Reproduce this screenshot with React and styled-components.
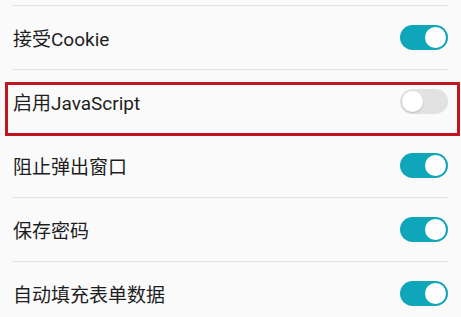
import React, { useState } from "react";
import styled, { createGlobalStyle } from "styled-components";

const GlobalStyle = createGlobalStyle`
  html, body {
    margin: 0;
    padding: 0;
    background: #fafafa;
  }
  body {
    font-family: Roboto, "Noto Sans CJK SC", sans-serif;
  }
`;

const Page = styled.div`
  position: relative;
  width: 461px;
  height: 317px;
  overflow: hidden;
  background: #fafafa;
`;

const TopEdge = styled.div`
  height: 5px;
  margin: 0 13px 0 12px;
  border-bottom: 1px solid #e3e3e3;
`;

const Row = styled.div`
  height: 63px;
  margin: 0 13px 0 12px;
  padding-left: 1px;
  display: flex;
  align-items: center;
  justify-content: space-between;
  border-bottom: 1px solid #e3e3e3;
`;

const Label = styled.span`
  font-size: 19px;
  color: #1e1e1e;
`;

const Track = styled.button`
  position: relative;
  width: 48px;
  height: 25px;
  padding: 0;
  border: none;
  border-radius: 13px;
  background: ${(p) => (p.$on ? "#0fa6b9" : "#e2e2e2")};
  cursor: pointer;
  flex-shrink: 0;
`;

const Knob = styled.span`
  position: absolute;
  top: 2px;
  left: ${(p) => (p.$on ? "25px" : "2px")};
  width: 21px;
  height: 21px;
  border-radius: 50%;
  background: #ffffff;
  box-shadow: ${(p) => (p.$on ? "none" : "0 1px 2px rgba(0,0,0,0.18)")};
`;

/* red annotation frame drawn over the JavaScript row */
const Highlight = styled.div`
  position: absolute;
  left: 5px;
  top: 82px;
  width: 455px;
  height: 54px;
  box-sizing: border-box;
  border: 3px solid #c3151f;
  pointer-events: none;
`;

function Toggle({ on, onClick }) {
  return (
    <Track $on={on} onClick={onClick}>
      <Knob $on={on} />
    </Track>
  );
}

const initial = [
  { label: "接受Cookie", on: true },
  { label: "启用JavaScript", on: false },
  { label: "阻止弹出窗口", on: true },
  { label: "保存密码", on: true },
  { label: "自动填充表单数据", on: true },
];

export default function App() {
  const [items, setItems] = useState(initial);

  const flip = (i) => {
    setItems(items.map((it, j) => (j === i ? { ...it, on: !it.on } : it)));
  };

  return (
    <Page>
      <GlobalStyle />
      <TopEdge />
      {items.map((it, i) => (
        <Row key={it.label}>
          <Label>{it.label}</Label>
          <Toggle on={it.on} onClick={() => flip(i)} />
        </Row>
      ))}
      <Highlight />
    </Page>
  );
}
